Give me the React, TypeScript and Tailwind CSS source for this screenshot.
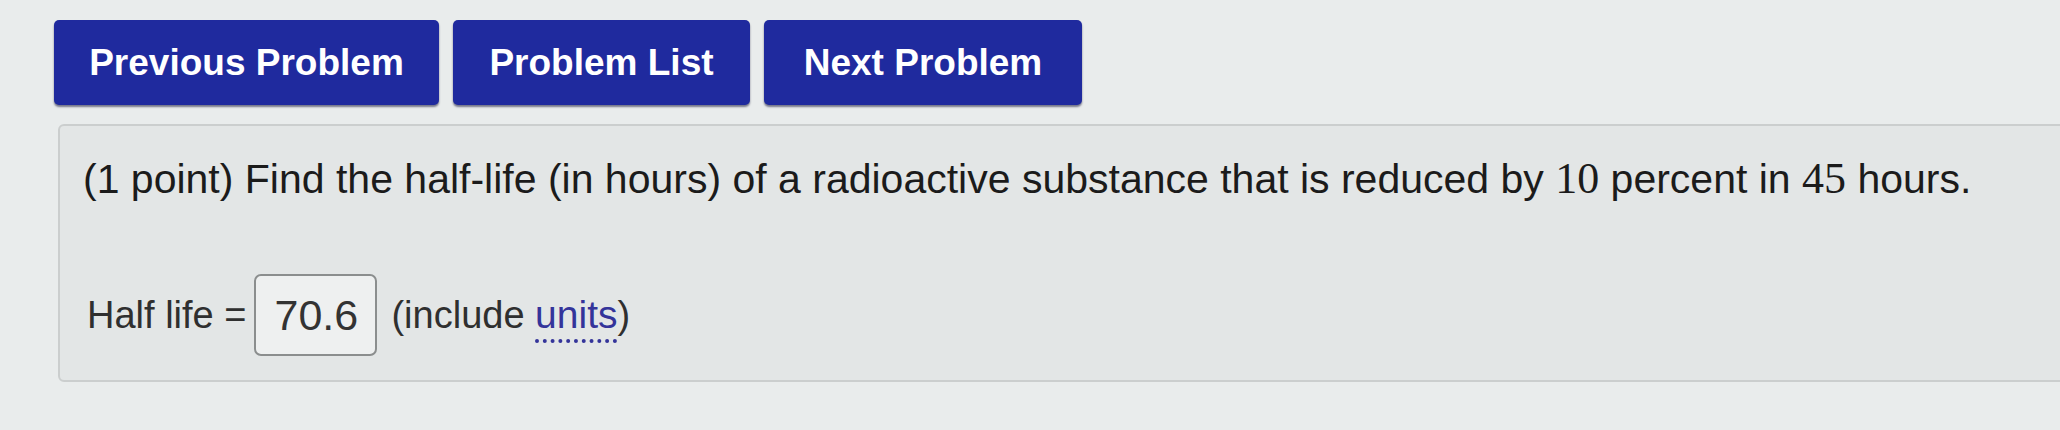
import React from "react";

const buttons = [
    { label: "Previous Problem", width: "w-[385px]" },
    { label: "Problem List", width: "w-[297px]" },
    { label: "Next Problem", width: "w-[318px]" },
];

const MathNum: React.FC<{ children: React.ReactNode }> = ({ children }) => (
    <span className="font-['Liberation_Serif',serif] text-[44px] leading-none">{children}</span>
);

const App: React.FC = () => {
    return (
        <div className="w-full h-[430px] overflow-hidden bg-[#e9ecec] font-['Liberation_Sans',Arial,sans-serif]">
            {/* Navigation buttons */}
            <div className="flex gap-[14px] pl-[54px] pt-[20px]">
                {buttons.map((b) => (
                    <button
                        key={b.label}
                        className={`${b.width} h-[85px] flex items-center justify-center rounded-[5px] bg-[#1f2a9e] text-white text-[37px] font-bold shadow-[0_2px_2px_rgba(0,0,40,0.5)]`}
                    >
                        {b.label}
                    </button>
                ))}
            </div>

            {/* Problem panel */}
            <div className="mt-[19px] ml-[58px] -mr-4 h-[258px] rounded-[6px] border-2 border-[#cbcece] bg-[#e3e6e6] pl-[23px] pt-[30px]">
                <p className="text-[41px] text-[#1b1b1b] leading-[47px]">
                    (1 point) Find the half-life (in hours) of a radioactive substance that is reduced by <MathNum>10</MathNum> percent in <MathNum>45</MathNum> hours.
                </p>

                <div className="mt-[71px] flex items-center pl-[4px] text-[38px] text-[#2f2f2f]">
                    <span>Half life =</span>
                    <div className="ml-[8px] w-[123px] h-[82px] flex items-center rounded-[7px] border-2 border-[#8b8e8e] bg-[#eef0f0] pl-[18px] text-[43px] text-[#333]">
                        70.6
                    </div>
                    <span className="ml-[14px]">
                        (include{" "}
                        <span className="text-[#34349a] text-[39px] underline decoration-dotted decoration-[4px] underline-offset-[12px]">units</span>)
                    </span>
                </div>
            </div>
        </div>
    );
};

export default App;
